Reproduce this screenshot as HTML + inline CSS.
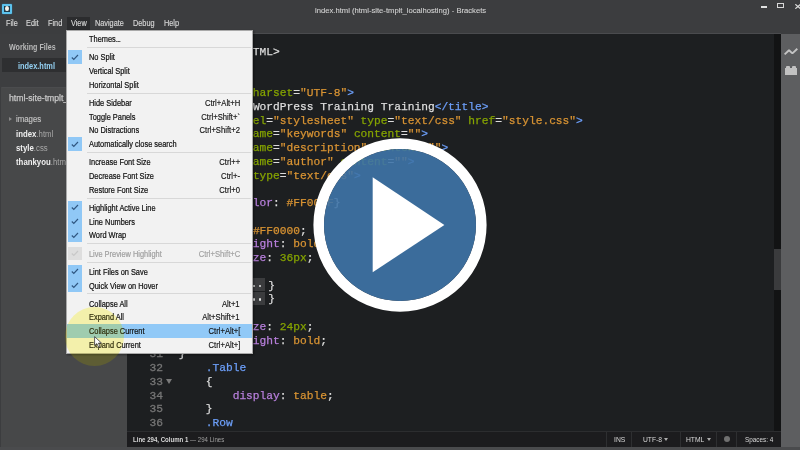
<!DOCTYPE html>
<html><head><meta charset="utf-8"><style>
*{margin:0;padding:0;box-sizing:border-box}
html,body{width:800px;height:450px;overflow:hidden;background:#3c3d3f;font-family:"Liberation Sans",sans-serif}
.a{position:absolute}
.sx{position:absolute;white-space:pre;transform-origin:0 0}
#menubar span{position:absolute;top:18px;font-size:8.5px;color:#d8d8d8;-webkit-text-stroke:0.15px currentColor;line-height:11px;white-space:pre;transform:scaleX(.86);transform-origin:0 0}
#sidebar{left:0;top:34px;width:127px;height:413px;background:#474849;border-left:1.5px solid #3c3d3f}
#editor{left:127px;top:34px;width:654px;height:397px;background:#1d1f21;overflow:hidden}
#status{left:127px;top:431px;width:654px;height:16px;background:#1c1c1e;border-top:1px solid #2c2d2f}
#bottom{left:0;top:447px;width:800px;height:3px;background:#4a4b4d}
#rtool{left:781px;top:34px;width:19px;height:413px;background:#5d5e60}
.code{position:absolute;left:178.8px;-webkit-text-stroke:0.25px currentColor;font-family:"Liberation Mono",monospace;font-size:11.23px;line-height:13.75px;color:#dddddd;white-space:pre}
.ln{position:absolute;left:127px;-webkit-text-stroke:0.3px currentColor;width:36px;text-align:right;font-family:"Liberation Mono",monospace;font-size:11.23px;line-height:13.75px;color:#767676;white-space:pre}
.t{color:#6c9ef8}.at{color:#85a300}.s{color:#d89333}.p{color:#b77fdb}.n{color:#85a300}.g{color:#dddddd}
#menu{left:66px;top:30px;width:187px;height:324px;background:#f2f2f2;border:1px solid #a9a9a9;box-shadow:1px 1px 2px rgba(0,0,0,.4)}
.mi{position:absolute;left:67px;width:185px;height:13.75px;font-size:8.5px;line-height:13.75px;color:#1b1b1b}
.mi .l{position:absolute;left:21.5px;top:1px;white-space:pre;-webkit-text-stroke:0.22px currentColor;transform:scaleX(.87);transform-origin:0 50%}
.mi .r{position:absolute;right:12px;top:1px;-webkit-text-stroke:0.15px currentColor;white-space:pre;transform:scaleX(.9);transform-origin:100% 50%}
.ck{position:absolute;left:68px;width:14px;background:#90c8f6}
.ckm{position:absolute;left:71.5px;width:7px;height:6px}
.sep{position:absolute;left:87px;width:164px;height:1px;background:#d8d8d8}
</style></head><body>
<div class="a" style="left:0;top:0;width:800px;height:34px;background:#3c3d3f"></div>
<div class="a" style="left:1.5px;top:3.5px;width:10.5px;height:10px;background:#5cc2ec;border-radius:1px;box-shadow:0 0 1.5px #2a7fb0"></div>
<div class="a" style="left:4px;top:5.8px;width:5.8px;height:5.8px;background:#1f3a48"></div>
<div class="a" style="left:5.2px;top:6.2px;width:3.6px;height:5px;border-radius:50%;background:#f4f0e8"></div>
<div class="sx" style="left:314.5px;top:6px;font-size:7.8px;color:#d2d2d2;line-height:10px;transform:scaleX(.98);-webkit-text-stroke:0.1px currentColor">index.html (html-site-tmplt_localhosting) - Brackets</div>
<div class="a" style="left:761px;top:6.4px;width:5.6px;height:1.4px;background:#e0e0e0"></div>
<div class="a" style="left:777px;top:3px;width:7px;height:5.2px;border:1px solid #d8d8d8;border-top-width:1.8px"></div>
<svg class="a" style="left:794.5px;top:3.6px" width="7" height="5"><path d="M0.3 0.3L5.5 4.7M5.5 0.3L0.3 4.7" stroke="#e0e0e0" stroke-width="1.2"/></svg>
<div id="menubar">
<div class="a" style="left:66.5px;top:17px;width:23.5px;height:13px;background:#2b2c2e"></div>
<span style="left:6px">File</span>
<span style="left:26px">Edit</span>
<span style="left:47.5px">Find</span>
<span style="left:70.5px">View</span>
<span style="left:95px">Navigate</span>
<span style="left:133px">Debug</span>
<span style="left:163.5px">Help</span>
</div>
<div id="sidebar" class="a"></div>
<div class="a" style="left:0;top:34px;width:127px;height:52.5px;background:#3d3e40"></div>
<div class="sx" style="left:9.3px;top:41.5px;font-size:8.5px;line-height:10px;color:#b9b9b9;font-weight:bold;transform:scaleX(.84)">Working Files</div>
<div class="a" style="left:1.5px;top:58.3px;width:125.5px;height:13.4px;background:#2e2f31"></div>
<div class="sx" style="left:18px;top:61.2px;font-size:8.5px;line-height:10px;color:#94d0f2;font-weight:bold;transform:scaleX(.87)">index.html</div>
<div class="a" style="left:1.5px;top:86.5px;width:125.5px;height:1px;background:#4b4c4e"></div>
<div class="sx" style="left:9px;top:93px;font-size:8.5px;line-height:10px;color:#c8c8c8;-webkit-text-stroke:0.25px currentColor;transform:scaleX(1.02)">html-site-tmplt_localhosting</div>
<div class="a" style="left:9px;top:117px;width:0;height:0;border-left:3px solid #8a8a8a;border-top:2.5px solid transparent;border-bottom:2.5px solid transparent"></div>
<div class="sx" style="left:15.5px;top:114px;font-size:8.5px;line-height:10px;color:#c4c4c4;-webkit-text-stroke:0.15px currentColor;transform:scaleX(.92)">images</div>
<div class="sx" style="left:15.5px;top:128.5px;font-size:8.5px;line-height:10px;color:#f0f0f0;transform:scaleX(.92)"><b>index</b><span style="color:#a8a8a8">.html</span></div>
<div class="sx" style="left:15.5px;top:143px;font-size:8.5px;line-height:10px;color:#f0f0f0;transform:scaleX(.92)"><b>style</b><span style="color:#a8a8a8">.css</span></div>
<div class="sx" style="left:15.5px;top:157.3px;font-size:8.5px;line-height:10px;color:#f0f0f0;transform:scaleX(.92)"><b>thankyou</b><span style="color:#a8a8a8">.html</span></div>
<div id="editor" class="a"></div>
<div class="a" style="left:127px;top:33px;width:654px;height:1px;background:#4a4b4e"></div>
<div class="code" style="top:45.88px"><span class="g">&lt;!DOCTYPE HTML&gt;</span></div>
<div class="code" style="top:59.62px"><span class="t">&lt;html&gt;</span></div>
<div class="code" style="top:73.38px"><span class="t">&lt;head&gt;</span></div>
<div class="code" style="top:87.12px">    <span class="t">&lt;meta </span><span class="at">charset</span>=<span class="s">"UTF-8"</span><span class="t">&gt;</span></div>
<div class="code" style="top:100.88px">    <span class="t">&lt;title&gt;</span>WordPress Training Training<span class="t">&lt;/title&gt;</span></div>
<div class="code" style="top:114.62px">    <span class="t">&lt;link </span><span class="at">rel</span>=<span class="s">"stylesheet"</span> <span class="at">type</span>=<span class="s">"text/css"</span> <span class="at">href</span>=<span class="s">"style.css"</span><span class="t">&gt;</span></div>
<div class="code" style="top:128.38px">    <span class="t">&lt;meta </span><span class="at">name</span>=<span class="s">"keywords"</span> <span class="at">content</span>=<span class="s">""</span><span class="t">&gt;</span></div>
<div class="code" style="top:142.12px">    <span class="t">&lt;meta </span><span class="at">name</span>=<span class="s">"description"</span> <span class="at">content</span>=<span class="s">""</span><span class="t">&gt;</span></div>
<div class="code" style="top:155.88px">    <span class="t">&lt;meta </span><span class="at">name</span>=<span class="s">"author"</span> <span class="at">content</span>=<span class="s">""</span><span class="t">&gt;</span></div>
<div class="code" style="top:169.62px">    <span class="t">&lt;style </span><span class="at">type</span>=<span class="s">"text/css"</span><span class="t">&gt;</span></div>
<div class="code" style="top:197.12px">    <span class="t">body</span>{<span class="p">color</span>: <span class="s">#FF00FF</span>}</div>
<div class="code" style="top:224.62px">    <span class="p">color</span>: <span class="s">#FF0000</span>;</div>
<div class="code" style="top:238.38px">    <span class="p">font-weight</span>: <span class="s">bold</span>;</div>
<div class="code" style="top:252.12px">    <span class="p">font-size</span>: <span class="n">36px</span>;</div>
<div class="code" style="top:279.62px">             <span style="margin-left:2px">}</span></div>
<div class="code" style="top:293.38px">             <span style="margin-left:2px">}</span></div>
<div class="code" style="top:320.88px">    <span class="p">font-size</span>: <span class="n">24px</span>;</div>
<div class="code" style="top:334.62px">    <span class="p">font-weight</span>: <span class="s">bold</span>;</div>
<div class="code" style="top:348.38px">}</div>
<div class="code" style="top:362.12px">    <span class="t">.Table</span></div>
<div class="code" style="top:375.88px">    {</div>
<div class="code" style="top:389.62px">        <span class="p">display</span>: <span class="s">table</span>;</div>
<div class="code" style="top:403.38px">    }</div>
<div class="code" style="top:417.12px">    <span class="t">.Row</span></div>
<div class="ln" style="top:348.38px">31</div>
<div class="ln" style="top:362.12px">32</div>
<div class="ln" style="top:375.88px">33</div>
<div class="ln" style="top:389.62px">34</div>
<div class="ln" style="top:403.38px">35</div>
<div class="ln" style="top:417.12px">36</div>
<div class="a" style="left:244px;top:278.40px;width:21px;height:12.6px;background:#3b3c3e"></div>
<div class="a" style="left:252.5px;top:284.60px;width:2.2px;height:2.2px;border-radius:50%;background:#e0e0e0"></div>
<div class="a" style="left:259.0px;top:284.60px;width:2.2px;height:2.2px;border-radius:50%;background:#e0e0e0"></div>
<div class="a" style="left:244px;top:292.15px;width:21px;height:12.6px;background:#3b3c3e"></div>
<div class="a" style="left:252.5px;top:298.35px;width:2.2px;height:2.2px;border-radius:50%;background:#e0e0e0"></div>
<div class="a" style="left:259.0px;top:298.35px;width:2.2px;height:2.2px;border-radius:50%;background:#e0e0e0"></div>
<div class="a" style="left:166px;top:379px;width:0;height:0;border-top:5px solid #7a7a7a;border-left:3px solid transparent;border-right:3px solid transparent"></div>
<div class="a" style="left:774px;top:34px;width:7px;height:397px;background:#121314"></div>
<div class="a" style="left:774px;top:249px;width:7px;height:41px;background:#3a3b3d"></div>
<div id="status" class="a"></div>
<div class="sx" style="left:133px;top:435px;font-size:7.5px;line-height:9px;color:#d8d8d8;transform:scaleX(.81)"><b>Line 294, Column 1</b> <span style="color:#a0a0a0">— 294 Lines</span></div>
<div class="a" style="left:606px;top:432px;width:1px;height:15px;background:#2e2f31"></div>
<div class="a" style="left:630.5px;top:432px;width:1px;height:15px;background:#2e2f31"></div>
<div class="a" style="left:680px;top:432px;width:1px;height:15px;background:#2e2f31"></div>
<div class="a" style="left:715.5px;top:432px;width:1px;height:15px;background:#2e2f31"></div>
<div class="a" style="left:736px;top:432px;width:1px;height:15px;background:#2e2f31"></div>
<div class="sx" style="left:613.5px;top:435px;font-size:7.5px;line-height:9px;color:#d8d8d8;transform:scaleX(.9)">INS</div>
<div class="sx" style="left:643px;top:435px;font-size:7.5px;line-height:9px;color:#d8d8d8;transform:scaleX(.9)">UTF-8</div>
<div class="a" style="left:664px;top:437.5px;width:0;height:0;border-top:3px solid #aaa;border-left:2.5px solid transparent;border-right:2.5px solid transparent"></div>
<div class="sx" style="left:686px;top:435px;font-size:7.5px;line-height:9px;color:#d8d8d8;transform:scaleX(.9)">HTML</div>
<div class="a" style="left:707px;top:437.5px;width:0;height:0;border-top:3px solid #aaa;border-left:2.5px solid transparent;border-right:2.5px solid transparent"></div>
<div class="a" style="left:724px;top:436px;width:6px;height:6px;border-radius:50%;background:#707070"></div>
<div class="sx" style="left:744.5px;top:435px;font-size:7.5px;line-height:9px;color:#d8d8d8;transform:scaleX(.85)">Spaces: 4</div>
<div id="bottom" class="a"></div>
<div id="rtool" class="a"></div>
<svg class="a" style="left:784px;top:46.5px" width="14" height="10"><path d="M0.6 7.4L5 3.2L8.4 6.4L13.3 1.8" stroke="#c4c4c4" stroke-width="1.9" fill="none" stroke-linejoin="bevel"/></svg>
<div class="a" style="left:785px;top:68.2px;width:12px;height:6.6px;background:#c2c2c2"></div>
<div class="a" style="left:786.2px;top:65.8px;width:3.6px;height:3px;background:#c2c2c2;border-radius:1px 1px 0 0"></div>
<div class="a" style="left:792.2px;top:65.8px;width:3.6px;height:3px;background:#c2c2c2;border-radius:1px 1px 0 0"></div>
<div id="menu" class="a"></div>
<div class="mi" style="top:32.10px;color:#111111"><span class="l">Themes<span style="letter-spacing:-0.6px">...</span></span><span class="r"></span></div>
<div class="sep" style="top:47.05px"></div>
<div class="ck" style="top:50.25px;height:13.75px"></div>
<div class="mi" style="top:50.25px;color:#111111"><span class="l">No Split</span><span class="r"></span></div>
<div class="mi" style="top:64.00px;color:#111111"><span class="l">Vertical Split</span><span class="r"></span></div>
<div class="mi" style="top:77.75px;color:#111111"><span class="l">Horizontal Split</span><span class="r"></span></div>
<div class="sep" style="top:92.70px"></div>
<div class="mi" style="top:95.90px;color:#111111"><span class="l">Hide Sidebar</span><span class="r">Ctrl+Alt+H</span></div>
<div class="mi" style="top:109.65px;color:#111111"><span class="l">Toggle Panels</span><span class="r">Ctrl+Shift+`</span></div>
<div class="mi" style="top:123.40px;color:#111111"><span class="l">No Distractions</span><span class="r">Ctrl+Shift+2</span></div>
<div class="ck" style="top:137.15px;height:13.75px"></div>
<div class="mi" style="top:137.15px;color:#111111"><span class="l">Automatically close search</span><span class="r"></span></div>
<div class="sep" style="top:152.10px"></div>
<div class="mi" style="top:155.30px;color:#111111"><span class="l">Increase Font Size</span><span class="r">Ctrl++</span></div>
<div class="mi" style="top:169.05px;color:#111111"><span class="l">Decrease Font Size</span><span class="r">Ctrl+-</span></div>
<div class="mi" style="top:182.80px;color:#111111"><span class="l">Restore Font Size</span><span class="r">Ctrl+0</span></div>
<div class="sep" style="top:197.75px"></div>
<div class="ck" style="top:200.95px;height:13.75px"></div>
<div class="mi" style="top:200.95px;color:#111111"><span class="l">Highlight Active Line</span><span class="r"></span></div>
<div class="ck" style="top:214.70px;height:13.75px"></div>
<div class="mi" style="top:214.70px;color:#111111"><span class="l">Line Numbers</span><span class="r"></span></div>
<div class="ck" style="top:228.45px;height:13.75px"></div>
<div class="mi" style="top:228.45px;color:#111111"><span class="l">Word Wrap</span><span class="r"></span></div>
<div class="sep" style="top:243.40px"></div>
<div class="ck" style="top:246.60px;height:13.75px;background:#dedede"></div>
<div class="mi" style="top:246.60px;color:#a0a0a0"><span class="l">Live Preview Highlight</span><span class="r">Ctrl+Shift+C</span></div>
<div class="sep" style="top:261.55px"></div>
<div class="ck" style="top:264.75px;height:13.75px"></div>
<div class="mi" style="top:264.75px;color:#111111"><span class="l">Lint Files on Save</span><span class="r"></span></div>
<div class="ck" style="top:278.50px;height:13.75px"></div>
<div class="mi" style="top:278.50px;color:#111111"><span class="l">Quick View on Hover</span><span class="r"></span></div>
<div class="sep" style="top:293.45px"></div>
<div class="mi" style="top:296.65px;color:#111111"><span class="l">Collapse All</span><span class="r">Alt+1</span></div>
<div class="mi" style="top:310.40px;color:#111111"><span class="l">Expand All</span><span class="r">Alt+Shift+1</span></div>
<div class="a" style="left:67px;top:324.15px;width:185px;height:13.75px;background:#91c9f7"></div>
<div class="mi" style="top:324.15px;color:#111111"><span class="l">Collapse Current</span><span class="r">Ctrl+Alt+[</span></div>
<div class="mi" style="top:337.90px;color:#111111"><span class="l">Expand Current</span><span class="r">Ctrl+Alt+]</span></div>
<svg class="a" style="left:71px;top:53.75px" width="8" height="7"><path d="M0.8 3.5L2.8 5.5L7 1" stroke="#2f5680" stroke-width="1.15" fill="none"/></svg>
<svg class="a" style="left:71px;top:140.65px" width="8" height="7"><path d="M0.8 3.5L2.8 5.5L7 1" stroke="#2f5680" stroke-width="1.15" fill="none"/></svg>
<svg class="a" style="left:71px;top:204.45px" width="8" height="7"><path d="M0.8 3.5L2.8 5.5L7 1" stroke="#2f5680" stroke-width="1.15" fill="none"/></svg>
<svg class="a" style="left:71px;top:218.20px" width="8" height="7"><path d="M0.8 3.5L2.8 5.5L7 1" stroke="#2f5680" stroke-width="1.15" fill="none"/></svg>
<svg class="a" style="left:71px;top:231.95px" width="8" height="7"><path d="M0.8 3.5L2.8 5.5L7 1" stroke="#2f5680" stroke-width="1.15" fill="none"/></svg>
<svg class="a" style="left:71px;top:250.10px" width="8" height="7"><path d="M0.8 3.5L2.8 5.5L7 1" stroke="#c8c8c8" stroke-width="1.15" fill="none"/></svg>
<svg class="a" style="left:71px;top:268.25px" width="8" height="7"><path d="M0.8 3.5L2.8 5.5L7 1" stroke="#2f5680" stroke-width="1.15" fill="none"/></svg>
<svg class="a" style="left:71px;top:282.00px" width="8" height="7"><path d="M0.8 3.5L2.8 5.5L7 1" stroke="#2f5680" stroke-width="1.15" fill="none"/></svg>
<div class="a" style="left:64.5px;top:306.5px;width:59px;height:59px;border-radius:50%;background:#fffcd0;mix-blend-mode:multiply"></div>
<div class="a" style="left:64.5px;top:306.5px;width:59px;height:59px;border-radius:50%;background:rgba(255,245,0,.13)"></div>
<svg class="a" style="left:93.6px;top:335.6px" width="10" height="13"><path d="M0.6 0.6L0.6 9.6L2.9 7.6L4.6 11.2L6.1 10.5L4.5 7.1L7.5 7.1Z" fill="#fff" stroke="#333" stroke-width="0.8"/></svg>
<svg class="a" style="left:0;top:0" width="800" height="450"><path d="M313.4,225.0 a86.6,86.6 0 1,0 173.2,0 a86.6,86.6 0 1,0 -173.2,0 Z M324.0,225.0 a76.0,76.0 0 1,0 152.0,0 a76.0,76.0 0 1,0 -152.0,0 Z" fill="#ffffff" fill-rule="evenodd" fill-opacity="1"/><circle cx="400.0" cy="225.0" r="76.0" fill="#3f74a8" fill-opacity="0.9"/><polygon points="372.7,177.3 372.7,272.2 444.4,225" fill="#fff"/></svg>
</body></html>
